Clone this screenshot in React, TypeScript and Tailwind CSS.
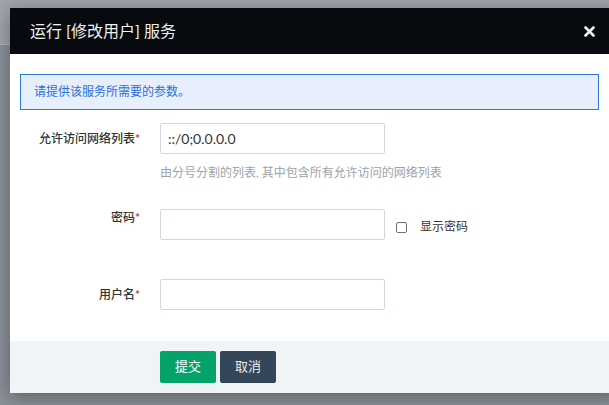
import React from "react";

const CJK = "font-['Lato','Noto_Sans_CJK_SC',sans-serif]";

function Req() {
  return <span className="font-bold text-[#d83b3b]">*</span>;
}

export default function App() {
  return (
    <div className={`relative h-[405px] w-[609px] overflow-hidden bg-[#8b9199] ${CJK}`}>
      {/* page behind the overlay */}
      <div className="absolute left-0 top-0 h-[44px] w-[609px] bg-[#a0a5ab]" />
      <div className="absolute left-0 top-[44px] h-px w-[609px] bg-[#b4b8bd]" />

      <div className="absolute left-[10px] top-[8px] w-[610px] bg-white shadow-[0_4px_18px_rgba(0,0,0,0.35)]">
        {/* header */}
        <div className="flex h-[46px] items-center justify-between bg-[#070a0e] pl-[20px] pr-[25px]">
          <span className="text-[16px] text-[#eef0f2]">运行 [修改用户] 服务</span>
          <svg width="11" height="11" viewBox="0 0 11 11" className="mt-px">
            <path d="M1.5 1.5 L9.5 9.5 M9.5 1.5 L1.5 9.5" stroke="#eef0f2" strokeWidth="2.6" strokeLinecap="round" />
          </svg>
        </div>

        {/* body */}
        <div className="px-[10px] pt-[20px]">
          <div className="flex h-[36px] w-[579px] items-center border border-[#2f78dc] bg-[#e6effb] pl-[13px] text-[12px] text-[#2a6fd6]">
            请提供该服务所需要的参数。
          </div>

          <div className="mt-[13px] flex">
            <div className="w-[120px] pt-[6px] text-right text-[12px] font-medium leading-[20px] text-[#333]">
              允许访问网络列表<Req />
            </div>
            <div className="ml-[20px]">
              <div className="flex h-[31px] w-[225px] items-center rounded-[2px] border border-[#cfd8e3] px-[7px] text-[14px] text-[#333]">
                ::/0;0.0.0.0
              </div>
              <div className="mt-[10px] text-[12px] leading-[17px] text-[#9da3aa]">
                由分号分割的列表, 其中包含所有允许访问的网络列表
              </div>
            </div>
          </div>

          <div className="mt-[28px] flex">
            <div className="w-[120px] text-right text-[12px] font-medium leading-[17px] text-[#333]">
              密码<Req />
            </div>
            <div className="ml-[20px] h-[31px] w-[225px] rounded-[2px] border border-[#cfd8e3]" />
            <div className="ml-[11px] mt-[13px] flex items-start">
              <div className="h-[11px] w-[11px] rounded-[2px] border border-[#6b7077] bg-white" />
              <span className="ml-[13px] -mt-[4px] text-[12px] leading-[17px] text-[#333]">显示密码</span>
            </div>
          </div>

          <div className="mt-[39px] flex items-center">
            <div className="w-[120px] text-right text-[12px] font-medium leading-[17px] text-[#333]">
              用户名<Req />
            </div>
            <div className="ml-[20px] h-[31px] w-[225px] rounded-[2px] border border-[#cfd8e3]" />
          </div>
        </div>

        {/* footer */}
        <div className="mt-[31px] flex h-[52px] gap-[4px] bg-[#f1f4f7] pl-[150px] pt-[10px]">
          <button className="h-[32px] w-[56px] rounded-[2px] bg-[#05a36a] text-[13px] text-white">提交</button>
          <button className="h-[32px] w-[56px] rounded-[2px] bg-[#36465a] text-[13px] text-[#e8ebef]">取消</button>
        </div>
      </div>
    </div>
  );
}
